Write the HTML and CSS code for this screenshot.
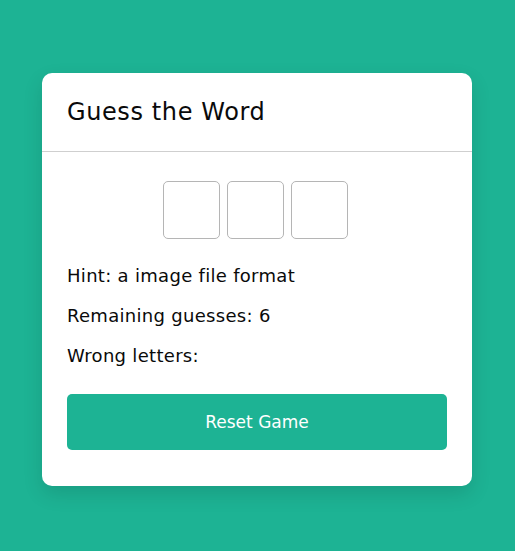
FILE: index.html
```html
<!DOCTYPE html>
<html>
<head>
<meta charset="utf-8">
<link rel="stylesheet" href="styles.css">
</head>
<body>
<div class="card">
  <div class="card-header">
    <h1 class="title">Guess the Word</h1>
  </div>
  <div class="card-body">
    <div class="letters">
      <div class="letter"></div>
      <div class="letter"></div>
      <div class="letter"></div>
    </div>
    <div class="info">
      <p class="line">Hint: a image file format</p>
      <p class="line">Remaining guesses: 6</p>
      <p class="line">Wrong letters:</p>
    </div>
    <button class="reset">Reset Game</button>
  </div>
</div>
</body>
</html>
```
FILE: styles.css
```css
html, body {
  margin: 0;
  padding: 0;
}
body {
  background: #1db394;
  font-family: "DejaVu Sans", "Open Sans", sans-serif;
  color: #0a0a0a;
  min-height: 551px;
  padding: 73px 0 0 42px;
  box-sizing: border-box;
}
.card {
  width: 430px;
  background: #fff;
  border-radius: 10px;
  box-shadow: 0 8px 20px rgba(0, 0, 0, 0.12);
}
.card-header {
  padding: 25px 25px 24px;
  border-bottom: 1px solid #cfcfcf;
}
.title {
  margin: 0;
  font-size: 24px;
  line-height: 29px;
  font-weight: normal;
  letter-spacing: 0.6px;
}
.card-body {
  padding: 29px 25px 36px;
  display: flex;
  flex-direction: column;
}
.letters {
  display: flex;
  justify-content: center;
  gap: 7px;
  padding-right: 3px;
}
.letter {
  width: 55px;
  height: 56px;
  border: 1px solid #b5b5b5;
  border-radius: 5px;
}
.info {
  margin-top: 25px;
  display: flex;
  flex-direction: column;
  gap: 16px;
}
.line {
  margin: 0;
  font-size: 18px;
  line-height: 24px;
  letter-spacing: 0.3px;
}
.reset {
  margin-top: 26px;
  height: 56px;
  border: none;
  border-radius: 5px;
  background: #1db394;
  color: #fff;
  font-family: inherit;
  font-size: 17px;
  cursor: pointer;
}
```
